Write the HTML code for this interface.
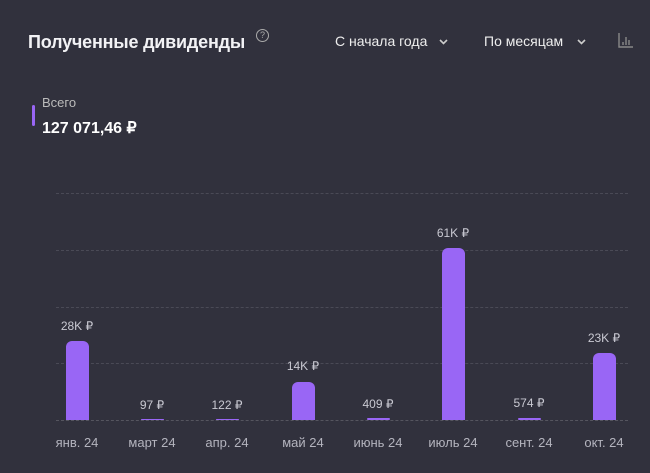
<!DOCTYPE html><html><head><meta charset="utf-8"><style>
body{margin:0;width:650px;height:473px;background:#31313d;font-family:"Liberation Sans",sans-serif;position:relative;overflow:hidden;color:#fff}
.a{position:absolute;white-space:nowrap}
.v{font-size:12px;color:#c9c9d2;transform:translateX(-50%)}
.m{font-size:13px;color:#b4b4be;transform:translateX(-50%);top:435px}
.bar{position:absolute;width:23px;background:#9966f5;border-radius:6px 6px 0 0}
.g{position:absolute;left:56px;width:572px;border-top:1px dashed #4a4a56}
</style></head><body>
<div class="a" style="left:28px;top:32px;font-size:18px;font-weight:bold;color:#f2f2f5;letter-spacing:-0.2px">Полученные дивиденды</div>
<div class="a" style="left:256px;top:29px;width:11px;height:11px;border:1px solid #aaa;border-radius:50%;font-size:9px;color:#aaa;text-align:center;line-height:11px">?</div>
<div class="a" style="left:335px;top:33px;font-size:14px;color:#eee">С начала года</div>
<svg class="a" style="left:439px;top:39px" width="9" height="6"><path d="M1 1l3.5 3.5L8 1" stroke="#ccc" stroke-width="1.6" fill="none"/></svg>
<div class="a" style="left:484px;top:33px;font-size:14px;color:#eee">По месяцам</div>
<svg class="a" style="left:577px;top:39px" width="9" height="6"><path d="M1 1l3.5 3.5L8 1" stroke="#ccc" stroke-width="1.6" fill="none"/></svg>
<svg class="a" style="left:618px;top:33px" width="16" height="15"><path d="M1 0v14h14M5 9v3M8 4v8M11 7v5" stroke="#888" stroke-width="1.4" fill="none"/></svg>
<div class="a" style="left:32px;top:105px;width:3px;height:21px;background:#9966f5;border-radius:2px"></div>
<div class="a" style="left:42px;top:95px;font-size:13px;color:#bbb">Всего</div>
<div class="a" style="left:42px;top:118px;font-size:16px;font-weight:bold;color:#fff">127 071,46 ₽</div>
<div class="g" style="top:193px"></div><div class="g" style="top:250px"></div><div class="g" style="top:307px"></div><div class="g" style="top:363px"></div><div class="g" style="top:420px;border-color:#55555f"></div>
<div class="bar" style="left:66px;top:341px;height:79px"></div>
<div class="bar" style="left:141px;top:419px;height:1px;border-radius:1px"></div>
<div class="bar" style="left:216px;top:419px;height:1px;border-radius:1px"></div>
<div class="bar" style="left:292px;top:382px;height:38px"></div>
<div class="bar" style="left:367px;top:418px;height:2px;border-radius:1px"></div>
<div class="bar" style="left:442px;top:248px;height:172px"></div>
<div class="bar" style="left:518px;top:418px;height:2px;border-radius:1px"></div>
<div class="bar" style="left:593px;top:353px;height:67px"></div>
<div class="a v" style="left:77px;top:319px">28K ₽</div>
<div class="a v" style="left:152px;top:398px">97 ₽</div>
<div class="a v" style="left:227px;top:398px">122 ₽</div>
<div class="a v" style="left:303px;top:359px">14K ₽</div>
<div class="a v" style="left:378px;top:397px">409 ₽</div>
<div class="a v" style="left:453px;top:226px">61K ₽</div>
<div class="a v" style="left:529px;top:396px">574 ₽</div>
<div class="a v" style="left:604px;top:331px">23K ₽</div>
<div class="a m" style="left:77px">янв. 24</div>
<div class="a m" style="left:152px">март 24</div>
<div class="a m" style="left:227px">апр. 24</div>
<div class="a m" style="left:303px">май 24</div>
<div class="a m" style="left:378px">июнь 24</div>
<div class="a m" style="left:453px">июль 24</div>
<div class="a m" style="left:529px">сент. 24</div>
<div class="a m" style="left:604px">окт. 24</div>
</body></html>
